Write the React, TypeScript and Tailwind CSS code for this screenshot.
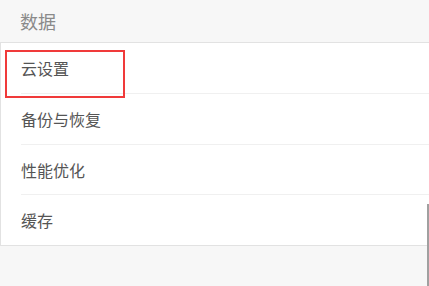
const items = [
  { label: "云设置", h: "h-[51px]" },
  { label: "备份与恢复", h: "h-[51px]" },
  { label: "性能优化", h: "h-[50px]" },
  { label: "缓存", h: "h-[50px]" },
];

export default function App() {
  return (
    <div
      className="relative h-[286px] w-[429px] overflow-hidden bg-[#f7f7f7]"
      style={{ fontFamily: '"Noto Sans CJK SC", "Noto Sans", sans-serif' }}
    >
      <div className="flex h-[42px] items-center px-5 text-[18px] text-[#8a8a8a]">数据</div>
      <div className="border-y border-l border-[#e2e2e2] bg-white">
        {items.map((item, i) => (
          <div key={item.label} className="pl-5">
            <div
              className={
                "flex items-center text-[16px] text-[#555] " +
                item.h +
                (i < items.length - 1 ? " border-b border-[#f0f0f0]" : "")
              }
            >
              {item.label}
            </div>
          </div>
        ))}
      </div>
      <div className="absolute left-[5px] top-[50px] h-[48px] w-[120px] border-2 border-[#f03a3a]" />
      <div className="absolute right-0 top-[204px] h-[82px] w-[2px] bg-[#a0a0a0]" />
    </div>
  );
}
